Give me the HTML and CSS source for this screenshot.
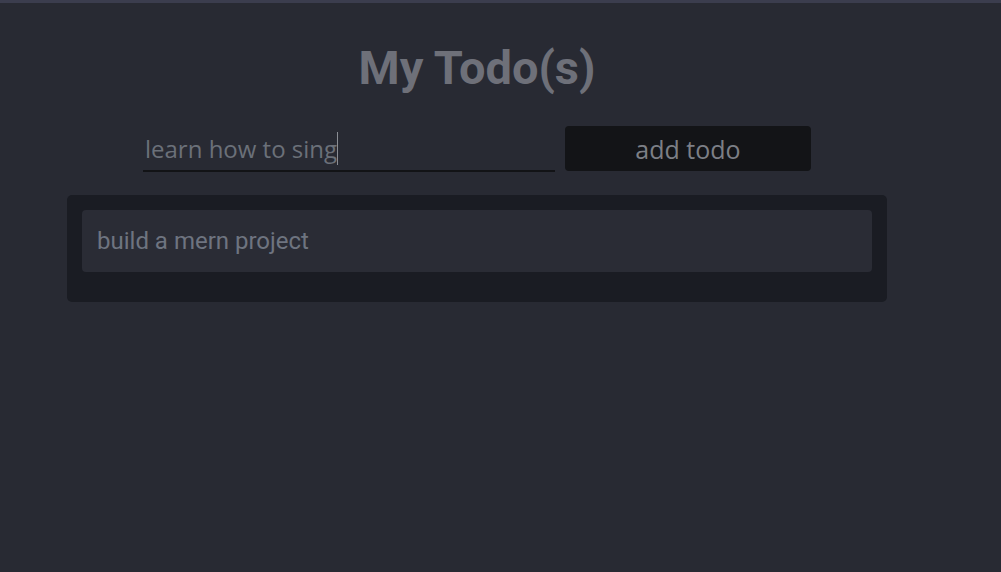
FILE: index.html
```html
<!DOCTYPE html>
<html>
<head>
<meta charset="utf-8">
<link rel="stylesheet" href="styles.css">
</head>
<body>
<div class="app">
  <h1 class="title">My Todo(s)</h1>
  <form class="add-row">
    <div class="input-wrap">
      <input class="todo-input" type="text" value="learn how to sing">
      <span class="caret"></span>
    </div>
    <button class="add-btn" type="button">add todo</button>
  </form>
  <div class="list">
    <div class="item">build a mern project</div>
  </div>
</div>
</body>
</html>
```
FILE: styles.css
```css
html, body {
  margin: 0;
  padding: 0;
  background: #282a33;
  height: 100%;
}
body {
  border-top: 3px solid #3b3d4e;
  box-sizing: border-box;
  font-family: Roboto, "Liberation Sans", sans-serif;
}
.app {
  width: 820px;
  margin-left: 67px;
  display: flex;
  flex-direction: column;
  align-items: center;
}
.title {
  margin: 37px 0 0;
  font-size: 47px;
  line-height: 56px;
  font-weight: 700;
  color: #6e7079;
}
.add-row {
  margin-top: 30px;
  display: flex;
  gap: 10px;
  align-items: flex-start;
}
.input-wrap {
  position: relative;
}
.todo-input {
  display: block;
  width: 412px;
  height: 46px;
  box-sizing: border-box;
  background: transparent;
  border: none;
  border-bottom: 2px solid #121316;
  padding: 0 2px;
  margin: 0;
  font-family: "Open Sans", sans-serif;
  font-size: 24px;
  color: #6b7079;
  outline: none;
}
.caret {
  position: absolute;
  left: 194px;
  top: 6px;
  width: 1px;
  height: 33px;
  background: #8a8d94;
}
.add-btn {
  width: 246px;
  height: 45px;
  background: #131417;
  border: none;
  border-radius: 4px;
  font-family: "Open Sans", sans-serif;
  font-size: 25px;
  color: #7c7f86;
  padding: 0;
  margin: 0;
}
.list {
  align-self: stretch;
  margin-top: 23px;
  background: #1a1c23;
  border-radius: 5px;
  padding: 15px 15px 30px;
}
.item {
  background: #2a2c35;
  border-radius: 4px;
  height: 62px;
  box-sizing: border-box;
  padding: 0 15px;
  display: flex;
  align-items: center;
  font-size: 24px;
  color: #6e7480;
}
```
